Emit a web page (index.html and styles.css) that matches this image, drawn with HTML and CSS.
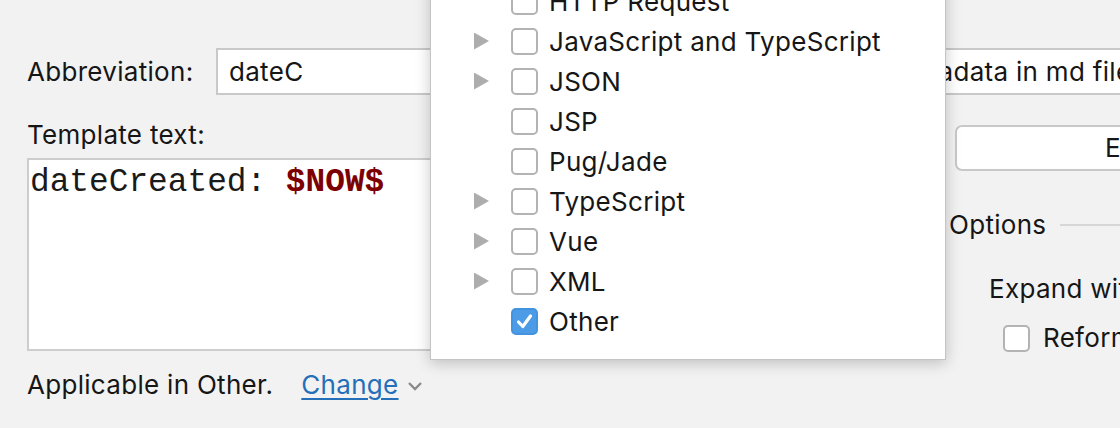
FILE: index.html
```html
<!DOCTYPE html>
<html>
<head>
<meta charset="utf-8">
<link rel="stylesheet" href="styles.css">
</head>
<body>
<div class="dialog">
  <div class="top-row">
    <label class="lbl abbr-lbl">Abbreviation:</label>
    <div class="field abbr-field">dateC</div>
    <label class="lbl desc-lbl">Description:</label>
    <div class="field desc-field">Add metadata in md file</div>
  </div>
  <div class="body">
    <div class="left">
      <div class="lbl">Template text:</div>
      <div class="editor"><span class="code">dateCreated: </span><span class="var">$NOW$</span></div>
      <div class="footer">
        <span>Applicable in Other.</span>
        <a class="link">Change</a>
        <svg class="chev" width="16" height="10" viewBox="0 0 16 10"><path d="M2 2 L8 8 L14 2" fill="none" stroke="#8a8a8a" stroke-width="2.4"/></svg>
      </div>
    </div>
    <div class="right">
      <div class="btn">Edit variables</div>
      <div class="options"><span>Options</span><span class="rule"></span></div>
      <div class="expand">Expand with</div>
      <div class="check-row"><span class="cb"></span><span>Reformat according to style</span></div>
    </div>
  </div>
</div>

<div class="popup">
  <div class="row"><span class="tri"></span><span class="cb"></span><span>HTTP Request</span></div>
  <div class="row"><span class="tri on"></span><span class="cb"></span><span>JavaScript and TypeScript</span></div>
  <div class="row"><span class="tri on"></span><span class="cb"></span><span>JSON</span></div>
  <div class="row"><span class="tri"></span><span class="cb"></span><span>JSP</span></div>
  <div class="row"><span class="tri"></span><span class="cb"></span><span>Pug/Jade</span></div>
  <div class="row"><span class="tri on"></span><span class="cb"></span><span>TypeScript</span></div>
  <div class="row"><span class="tri on"></span><span class="cb"></span><span>Vue</span></div>
  <div class="row"><span class="tri on"></span><span class="cb"></span><span>XML</span></div>
  <div class="row"><span class="tri"></span><span class="cb checked"><svg width="27" height="27" viewBox="0 0 27 27"><path d="M7.5 14 L11.8 18.5 L19.5 8" fill="none" stroke="#fff" stroke-width="3.2" stroke-linecap="round" stroke-linejoin="round"/></svg></span><span>Other</span></div>
</div>
</body>
</html>
```

FILE: styles.css
```css
html, body {
  margin: 0;
  padding: 0;
}
body {
  width: 1120px;
  height: 428px;
  overflow: hidden;
  background: #f2f2f2;
  font-family: Inter, "Noto Sans", sans-serif;
  font-size: 26px;
  letter-spacing: 0.3px;
  color: #161616;
  position: relative;
}
.dialog {
  display: flex;
  flex-direction: column;
}
.lbl {
  line-height: 32px;
  white-space: nowrap;
}
.top-row {
  display: flex;
  align-items: center;
  margin-top: 48px;
  padding-left: 27px;
  height: 47px;
}
.abbr-lbl {
  width: 189px;
}
.field {
  box-sizing: border-box;
  height: 47px;
  background: #fff;
  border: 2px solid #c9c9c9;
  line-height: 43px;
  padding-left: 11px;
  white-space: nowrap;
  overflow: hidden;
}
.abbr-field {
  width: 420px;
}
.desc-lbl {
  margin-left: 20px;
  margin-right: 12px;
}
.desc-field {
  flex: 1;
  margin-right: -30px;
}
.body {
  display: grid;
  grid-template-columns: 908px 1fr;
  column-gap: 14px;
  padding-left: 27px;
}
.left {
  display: flex;
  flex-direction: column;
}
.left > .lbl {
  margin-top: 24px;
}
.editor {
  box-sizing: border-box;
  margin-top: 7px;
  height: 193px;
  background: #fff;
  border: 2px solid #cdcdcd;
  padding: 3px 0 0 1px;
  font-family: "Liberation Mono", monospace;
  font-size: 32.8px;
  letter-spacing: 0;
  line-height: 40px;
  white-space: pre;
}
.code {
  color: #1a1a1a;
}
.var {
  color: #7d0000;
  font-weight: bold;
}
.footer {
  margin-top: 18px;
  line-height: 32px;
  display: flex;
  align-items: center;
}
.link {
  color: #2470b8;
  text-decoration: underline;
  text-underline-offset: 4px;
  text-decoration-thickness: 2px;
  margin-left: 28px;
}
.chev {
  margin-left: 8px;
  margin-top: 2px;
}
.right {
  display: flex;
  flex-direction: column;
  white-space: nowrap;
}
.btn {
  box-sizing: border-box;
  margin-top: 30px;
  margin-left: 6px;
  height: 46px;
  background: #fff;
  border: 2px solid #c8c8c8;
  border-radius: 7px;
  line-height: 42px;
  padding-left: 148px;
  margin-right: -40px;
}
.options {
  margin-top: 38px;
  line-height: 32px;
  display: flex;
  align-items: center;
}
.rule {
  flex: 1;
  height: 2px;
  background: #d6d6d6;
  margin-left: 14px;
}
.expand {
  margin-top: 32px;
  margin-left: 40px;
  line-height: 32px;
}
.check-row {
  margin-top: 17px;
  margin-left: 54px;
  line-height: 32px;
  display: flex;
  align-items: center;
}
.check-row .cb {
  margin-right: 13px;
}
.cb {
  box-sizing: border-box;
  width: 27px;
  height: 27px;
  flex: none;
  background: #fff;
  border: 2px solid #b3b3b3;
  border-radius: 5px;
  display: inline-block;
}
.cb.checked {
  background: #4b9be6;
  border-color: #4394e0;
  position: relative;
}
.cb.checked svg {
  position: absolute;
  left: -2px;
  top: -2px;
}
.popup {
  position: absolute;
  left: 430px;
  top: -31px;
  width: 516px;
  box-sizing: border-box;
  background: #fff;
  border: 1px solid #c4c4c4;
  box-shadow: 0 3px 14px rgba(0, 0, 0, 0.22);
  padding: 11px 0 18px 0;
}
.row {
  height: 40px;
  display: flex;
  align-items: center;
  white-space: nowrap;
}
.tri {
  width: 15px;
  height: 17px;
  margin-left: 43px;
  margin-right: 22px;
  flex: none;
}
.tri.on {
  background: #adadad;
  clip-path: polygon(0 0, 100% 50%, 0 100%);
}
.row .cb {
  margin-right: 11px;
}
```
